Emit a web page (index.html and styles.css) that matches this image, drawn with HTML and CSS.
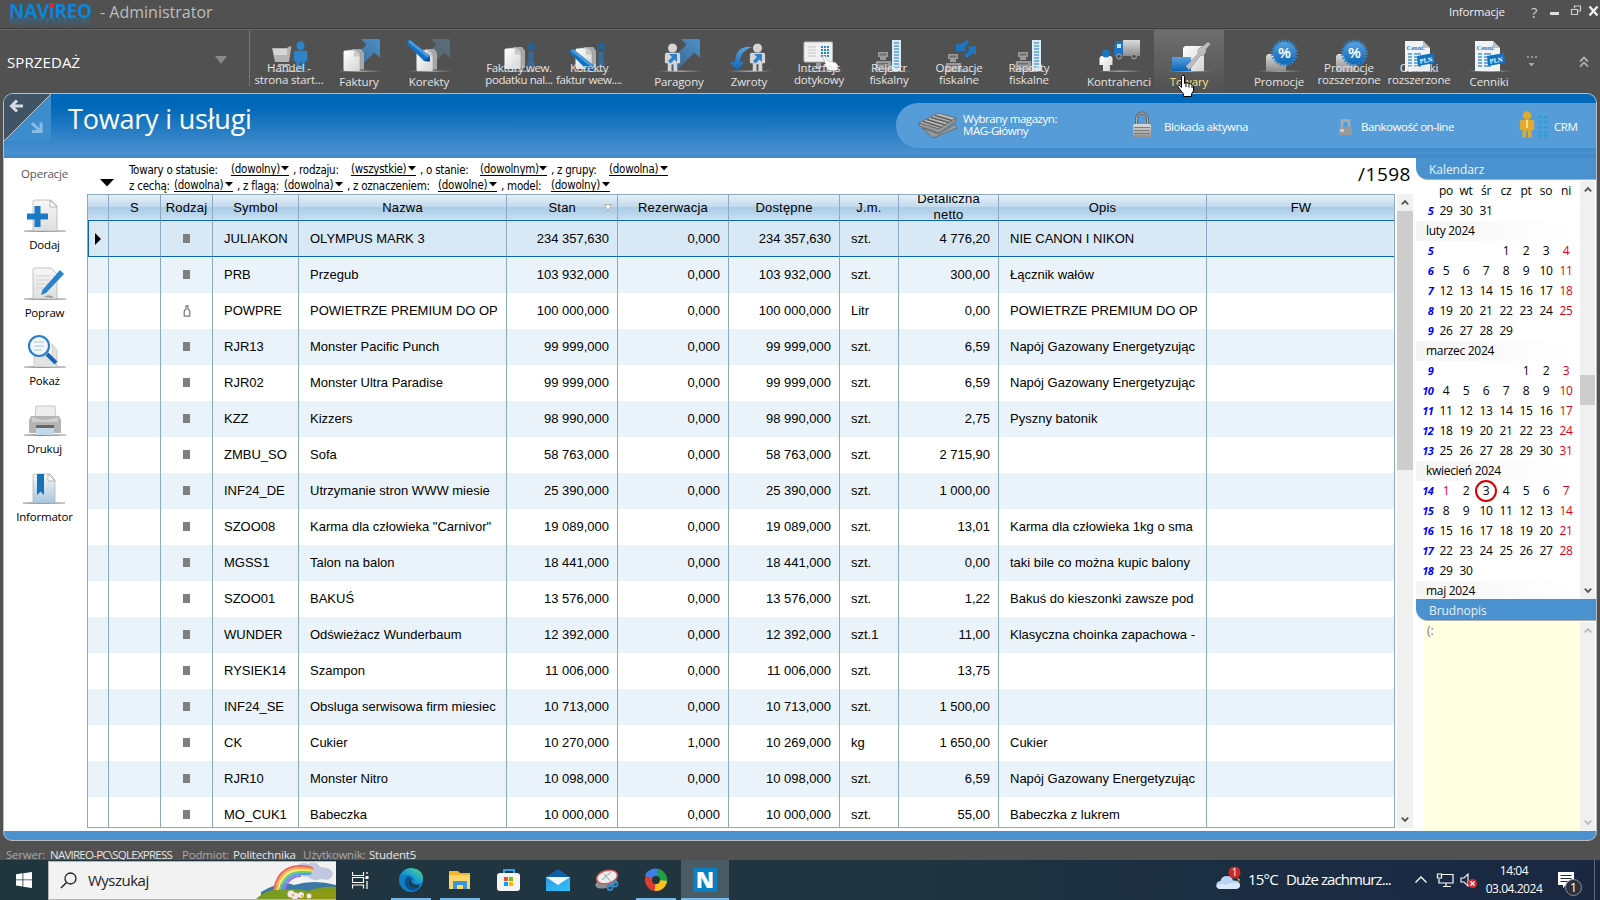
FILE: index.html
```html
<!DOCTYPE html>
<html lang="pl">
<head>
<meta charset="utf-8">
<title>Navireo</title>
<link rel="stylesheet" href="styles.css">
</head>
<body>
<svg class="defs" width="0" height="0">
  <defs>
    <linearGradient id="gGray" x1="0" y1="0" x2="0" y2="1"><stop offset="0" stop-color="#dcdcdc"/><stop offset="1" stop-color="#8c8c8c"/></linearGradient>
    <linearGradient id="gPaper" x1="0" y1="0" x2="1" y2="1"><stop offset="0" stop-color="#fff"/><stop offset="1" stop-color="#d4d4d4"/></linearGradient>
    <linearGradient id="gBlue" x1="0" y1="0" x2="0" y2="1"><stop offset="0" stop-color="#5aa2e0"/><stop offset="1" stop-color="#0a64b4"/></linearGradient>
    <linearGradient id="gArrow" x1="1" y1="0" x2="0" y2="1"><stop offset="0" stop-color="#4a90cc"/><stop offset="1" stop-color="#3a6184"/></linearGradient>
    <linearGradient id="gArrowG" x1="1" y1="0" x2="0" y2="1"><stop offset="0" stop-color="#5b6d7d"/><stop offset="1" stop-color="#55606a"/></linearGradient>
    <linearGradient id="gShadow" x1="0" y1="0" x2="1" y2="0"><stop offset="0" stop-color="#aaa" stop-opacity="0"/><stop offset=".5" stop-color="#aaa"/><stop offset="1" stop-color="#aaa" stop-opacity="0"/></linearGradient>
    <linearGradient id="gShadowD" x1="0" y1="0" x2="1" y2="0"><stop offset="0" stop-color="#777" stop-opacity=".5"/><stop offset=".4" stop-color="#666"/><stop offset="1" stop-color="#777" stop-opacity=".5"/></linearGradient>
    <linearGradient id="gSheet" x1="0" y1="0" x2="0" y2="1"><stop offset="0" stop-color="#f7f7f7"/><stop offset="1" stop-color="#dedede"/></linearGradient>
    <linearGradient id="gBook" x1="0" y1="0" x2="0" y2="1"><stop offset="0" stop-color="#f7f7f7"/><stop offset="1" stop-color="#a9c6de"/></linearGradient>
    <linearGradient id="gEdge" x1="0" y1="1" x2="1" y2="0"><stop offset="0" stop-color="#0c59a4"/><stop offset=".5" stop-color="#1ba0d8"/><stop offset="1" stop-color="#5fdc6a"/></linearGradient>
    <linearGradient id="gMail" x1="0" y1="0" x2="1" y2="1"><stop offset="0" stop-color="#2f9be8"/><stop offset="1" stop-color="#2cc4f6"/></linearGradient>
    <symbol id="base" viewBox="0 0 70 45"><rect x="14" y="40.5" width="44" height="1.4" fill="url(#gShadow)"/></symbol>
    <symbol id="docs" viewBox="0 0 70 45">
      <path d="M28 19h9l3 3.500v17h-12z" fill="#a8a8a8"/>
      <path d="M24 20h9l3 3.500v17h-12z" fill="#c6c6c6" stroke="#8f8f8f" stroke-width=".5"/>
      <path d="M21 20.500h9l5.500 6v14.500H21q-1.500 0-1.500-1.500V22q0-1.500 1.500-1.500z" fill="url(#gPaper)"/>
      <path d="M30 20.500v6h5.500z" fill="#c8c8c8"/>
    </symbol>
    <symbol id="up" viewBox="0 0 70 45"><path d="M37 9h17q2 0 2 2v17l-5.500-5.500L32 41 24 33l18.500-18.500z"/></symbol>
    <symbol id="pen" viewBox="0 0 70 45"><path d="M16 10l20 16v5.500l-6-.5L13 14q0-4 3-4z" fill="#0f72c4"/><path d="M16 10l20 16-2 2L14 12z" fill="#4a9ade"/><path d="M30 31l6 .5-.5-5.500z" fill="#0a4f91"/></symbol>
    <symbol id="info" viewBox="0 0 70 45"><path d="M43.500 13.500l7 6M50.500 13.500l-7 6" stroke="#1468ae" stroke-width="2.200"/><path d="M44.500 22h5v11h3l-5.500 5-5.500-5h3z" fill="#3173a8" opacity=".8"/></symbol>
    <symbol id="man" viewBox="0 0 20 30"><circle cx="10" cy="5" r="4.800"/><path d="M4 10h12q2 0 2 2v9h-3v8.500H11V22H9v7.500H5V21H2v-9q0-2 2-2z"/></symbol>
    <symbol id="till" viewBox="0 0 70 45"><path d="M24 22h10v5H24zM26 27h6v3h-6zM22 31h15l1 9H21z" fill="#9a9a9a"/><path d="M25.500 23.500h7v2h-7zM24 33h10v1.500H24zM24 36h10v1.500H24z" fill="#6c6c6c"/></symbol>
    <symbol id="tape" viewBox="0 0 70 45"><path d="M38 10h9v31h-9z" fill="#dceaf5"/><path d="M40 13h5M40 16h5M40 19h5M40 22h5M40 25h5M40 28h5M40 31h5M40 34h5M40 37h5" stroke="#5a9fd8" stroke-width="1.300"/></symbol>
    <symbol id="promo" viewBox="0 0 70 45"><path d="M24 24h15l3 3v14H22V26z" fill="url(#gGray)"/><circle cx="40.500" cy="23" r="11.500" fill="url(#gBlue)"/><circle cx="40.500" cy="23" r="12" fill="none" stroke="#2c85cf" stroke-width="3" stroke-dasharray="1.640 1.500"/><text x="40.500" y="28" text-anchor="middle" font-family="Liberation Sans" font-size="14" font-weight="bold" fill="#fff">%</text></symbol>
    <symbol id="price" viewBox="0 0 70 45"><path d="M21 11h18l7 7v23H21z" fill="#f0f3f6"/><path d="M39 11l7 7h-7z" fill="#b9c2ca"/><text x="22.500" y="20" font-family="Liberation Serif" font-size="6.500" font-weight="bold" fill="#2b7dc4">Cenni.</text><path d="M24 24h4M30 24h7M24 27h4M30 27h6M24 30h4M30 30h4M24 33h4M30 33h5M24 36h4M30 36h7" stroke="#4a93d0" stroke-width="1.300"/><path d="M33 26l17-3 1 10-17 3z" fill="#1671c0"/><text x="36" y="33.500" transform="rotate(-9 36 33)" font-family="Liberation Serif" font-size="6.500" font-weight="bold" fill="#fff">PLN</text></symbol>
    <symbol id="caret" viewBox="0 0 8 5"><path d="M0 0h8L4 4.500z" fill="#000"/></symbol>
    <symbol id="chUp" viewBox="0 0 8 7"><path d="M.8 5.300L4 2.100l3.200 3.200" fill="none" stroke="currentColor" stroke-width="1.900"/></symbol>
    <symbol id="chDn" viewBox="0 0 8 7"><path d="M.8 1.700L4 4.900l3.200-3.200" fill="none" stroke="currentColor" stroke-width="1.900"/></symbol>
    <symbol id="bottle" viewBox="0 0 8 12"><path d="M3 .8h2v3.200l1.800 2v5.200H1.200V6L3 4z" fill="#fff" stroke="#777" stroke-width="1.200"/></symbol>
    <symbol id="floor" viewBox="0 0 42 36"><rect x="0" y="32.300" width="42" height="1.500" fill="url(#gShadowD)"/></symbol>
    <symbol id="padlock" viewBox="0 0 20 28"><path d="M4.500 14V8a5.500 6 0 0 1 11 0v6" fill="none" stroke="#666" stroke-width="3"/><path d="M4.500 14V8a5.500 6 0 0 1 11 0v6" fill="none" stroke="#b5b5b5" stroke-width="1"/><rect x="1" y="13" width="18" height="14" rx="2" fill="url(#gGray)"/><path d="M2 16.500h16M2 19.500h16M2 22.500h16" stroke="#808080" stroke-width="1"/></symbol>
  </defs>
</svg>

<div class="desktop">
  <header class="titlebar">
    <div class="brand"><span class="logo">NAViREO</span><i class="dot"></i><i class="mirror"></i></div>
    <span class="who">- Administrator</span>
    <span class="inform">Informacje</span>
    <span class="help">?</span>
    <svg class="winbtns" width="50" height="24"><path d="M0 13.500h9" stroke="#ddd" stroke-width="3"/><path d="M24.500 8.500v-2.500h6v5h-2.500M21.500 9.500h6v5h-6z" fill="none" stroke="#ccc" stroke-width="1.200"/><path d="M39.500 6.500l8 9M47.500 6.500l-8 9" stroke="#eee" stroke-width="2.400"/></svg>
  </header>

  <nav class="toolbar">
    <div class="module"><span>SPRZEDAŻ</span><svg width="12" height="8"><path d="M0 0h12L6 8z" fill="#8a8a8a"/></svg></div>
    <div class="tool two"><svg viewBox="0 0 70 45"><use href="#base"/><path d="M18 18h15l2-1.500h2.500L35 32H21zM24 34h12v2H24z" fill="#b4b4b4"/><path d="M19 19h14v6H20z" fill="#d6d6d6"/><g fill="#2d82c8"><svg x="38" y="11" width="17" height="29" viewBox="0 0 20 30" preserveAspectRatio="none"><use href="#man"/></svg></g></svg><span>Handel -<br>strona start...</span></div>
    <div class="tool"><svg viewBox="0 0 70 45"><use href="#base"/><use href="#up" fill="url(#gArrow)"/><use href="#docs"/></svg><span>Faktury</span></div>
    <div class="tool"><svg viewBox="0 0 70 45"><use href="#base"/><use href="#up" fill="url(#gArrowG)"/><use href="#docs" x="3"/><use href="#pen"/></svg><span>Korekty</span></div>
    <div class="tool two gap"><svg viewBox="0 0 70 45"><use href="#base"/><use href="#docs" y="-2" x="1"/><use href="#info"/></svg><span class="tight">Faktury wew.<br>podatku nal...</span></div>
    <div class="tool two"><svg viewBox="0 0 70 45"><use href="#base"/><use href="#docs" y="-2" x="2"/><use href="#pen" x="3" y="9"/><use href="#info"/></svg><span class="tight">Korekty<br>faktur wew....</span></div>
    <div class="tool gap"><svg viewBox="0 0 70 45"><use href="#base"/><use href="#up" fill="url(#gArrow)"/><g fill="#d4d4d4"><svg x="19" y="13" width="19" height="29" viewBox="0 0 20 30"><use href="#man"/></svg></g><path d="M25 24h8v8l-2.500-2.500-4 4-2.500-2.500 4-4z" fill="#2d82c8"/></svg><span>Paragony</span></div>
    <div class="tool"><svg viewBox="0 0 70 45"><use href="#base"/><path d="M38 17q-16-2-17 15h-5l7 9 7-9h-4q0-11 12-15z" fill="url(#gBlue)"/><g fill="#d4d4d4"><svg x="34" y="13" width="19" height="29" viewBox="0 0 20 30"><use href="#man"/></svg></g><path d="M40 24h8v8l-2.500-2.500-4 4-2.500-2.500 4-4z" fill="#2d82c8"/></svg><span>Zwroty</span></div>
    <div class="tool two"><svg viewBox="0 0 70 45"><use href="#base"/><path d="M32 33h5v6h-5z" fill="#999"/><rect x="20" y="12" width="28.500" height="20" rx="1" fill="#f0f0f0" stroke="#bbb"/><path d="M24 17h8M24 20h8M24 23h8M24 26h8" stroke="#c4c4c4"/><path d="M37 17h8M37 20h8M37 23h8M37 26h8" stroke="#2d82c8" stroke-width="2" stroke-dasharray="2 1"/><path d="M38.500 26q2-1.500 3 1l3 4 7 1.500 2.500 3-1 5h-8l-5-6 1.500-.5z" fill="#fff" stroke="#999" stroke-width=".5"/></svg><span>Interfejs<br>dotykowy</span></div>
    <div class="tool two"><svg viewBox="0 0 70 45"><use href="#base"/><use href="#till"/><use href="#tape"/></svg><span>Rejestr<br>fiskalny</span></div>
    <div class="tool two"><svg viewBox="0 0 70 45"><use href="#base"/><use href="#till" y="2"/><path d="M43 10l2 2-5 6 3 3H32V13l3 2zM52 16v9l-3-2-6 5-3-3 6-5-3-3z" fill="#1c76c4"/></svg><span>Operacje<br>fiskalne</span></div>
    <div class="tool two"><svg viewBox="0 0 70 45"><use href="#base"/><use href="#till"/><use href="#tape"/></svg><span>Raporty<br>fiskalne</span></div>
    <div class="tool gap"><svg viewBox="0 0 70 45"><use href="#base"/><path d="M39 10h17v16H39z" fill="url(#gGray)"/><path d="M32 11h7v15h-9v-9z" fill="#1c74c2"/><path d="M33 14h4v4h-4z" fill="#cfe3f4"/><circle cx="35" cy="26.500" r="2.500" fill="#555" stroke="#aaa"/><circle cx="50" cy="26.500" r="2.500" fill="#555" stroke="#aaa"/><path d="M17 26h10l1.500 2v7H26v6h-7v-6h-3.500v-7z" fill="url(#gPaper)"/><circle cx="22" cy="23.500" r="4" fill="#1c74c2"/></svg><span>Kontrahenci</span></div>
    <div class="tool hot"><svg viewBox="0 0 70 45"><use href="#base"/><path d="M31 16h18l1 2v23H29V18z" fill="url(#gPaper)"/><path d="M18 27h19v14H18z" fill="url(#gBlue)"/><path d="M32 36l12-12q-1-6 4-7l6-5 2.500 2-4.500 5q1 6-6 7L35 40z" fill="#bdbdbd" stroke="#8c8c8c" stroke-width=".6"/></svg><span>Towary</span></div>
    <div class="tool gap"><svg viewBox="0 0 70 45"><use href="#base"/><use href="#promo"/></svg><span>Promocje</span></div>
    <div class="tool two"><svg viewBox="0 0 70 45"><use href="#base"/><use href="#promo"/></svg><span>Promocje<br>rozszerzone</span></div>
    <div class="tool two"><svg viewBox="0 0 70 45"><use href="#base"/><use href="#price"/></svg><span>Cenniki<br>rozszerzone</span></div>
    <div class="tool"><svg viewBox="0 0 70 45"><use href="#base"/><use href="#price"/></svg><span>Cenniki</span></div>
    <svg class="more" width="70" height="30"><path d="M3 5h2M7 5h2M11 5h2" stroke="#aaa" stroke-width="1.500"/><path d="M4.500 11h6l-3 3.500z" fill="#aaa"/><path d="M56 9.500l4-4 4 4M56 14.500l4-4 4 4" fill="none" stroke="#aaa" stroke-width="1.800"/></svg>
  </nav>

  <main class="window">
    <div class="band">
      <svg class="corner" width="48" height="48"><path d="M0 0h47L0 47z" fill="#405465"/><path d="M47 0v43q0 4-4 4H0z" fill="#3d8dce"/><path d="M0 47L47 0" stroke="#b9c4cc" stroke-width="1"/><path d="M19 12H8M13 6.500L7.500 12l5.500 5.500" fill="none" stroke="#d5dade" stroke-width="3"/><path d="M28 29l7 7M37 28.500v9h-9" fill="none" stroke="#88bbe6" stroke-width="3"/></svg>
      <h1>Towary i usługi</h1>
      <div class="pill">
        <svg class="pal" width="40" height="30"><path d="M1 12L20 2l18 5-17 11z" fill="#b8b8b8" stroke="#666" stroke-width=".8"/><path d="M5 10.500l19 6M9 8.500l18 5.500M13 6.500l18 5M17 4.500l17 5" stroke="#5f5f5f" stroke-width="1.600"/><path d="M1 12l20 6 17-11v3L21 22 1 15zM4 17l17 6 16-10 2 4-24 10z" fill="#999" stroke="#666" stroke-width=".8"/></svg>
        <span class="mag">Wybrany magazyn:<br>MAG-Główny</span>
        <svg class="lock" width="20" height="28"><use href="#padlock"/></svg><span class="blok">Blokada aktywna</span>
        <svg class="lock2" width="15" height="18"><path d="M4 9V2.500h7V9" fill="none" stroke="#a8aeb4" stroke-width="2.500"/><path d="M1 9h13v8H1z" fill="#999"/><path d="M2 11h4v3H2z" fill="#c8c8c8"/></svg><span class="bank">Bankowość on-line</span>
        <svg class="crmi" width="32" height="30"><g fill="#e0aa2e"><svg x="0" y="0" width="18" height="29" viewBox="0 0 20 30"><use href="#man"/></svg></g><path d="M9 10v8" stroke="#f6dc8c" stroke-width="2"/><path d="M20 7h10M20 12h10M20 17h10M20 22h10M20 26h10" stroke="#2ea0d6" stroke-width="2.500" stroke-dasharray="4 2"/></svg><span class="crm">CRM</span>
      </div>
    </div>

    <div class="body">
      <aside class="ops">
        <h2>Operacje</h2>
        <div class="op"><svg width="42" height="36"><use href="#floor"/><path d="M11 2h16l6 6v25H9V4q0-2 2-2z" fill="url(#gSheet)" stroke="#b5b5b5" stroke-width=".8"/><path d="M26 2v7h7z" fill="#fff" stroke="#aaa" stroke-width=".8"/><path d="M3 15.500h7.500V8h6v7.500H24v6h-7.500V29h-6v-7.500H3z" fill="#1c78c6"/></svg><span>Dodaj</span></div>
        <div class="op"><svg width="42" height="36"><use href="#floor"/><path d="M11 2h16l6 6v25H9V4q0-2 2-2z" fill="url(#gSheet)" stroke="#b5b5b5" stroke-width=".8"/><path d="M12 10h14M12 14h14M12 18h12M12 22h8" stroke="#d0d0d0"/><path d="M36 4l4 4-18 19-5 2 1.500-5z" fill="#2a82d0"/><path d="M20 31q6-4 10 1z" fill="#999"/></svg><span>Popraw</span></div>
        <div class="op"><svg width="42" height="36"><use href="#floor"/><path d="M10 22h18V10l5 6v17H10z" fill="#e2e2e2" stroke="#bbb" stroke-width=".6"/><circle cx="15" cy="12" r="10" fill="#f2f7fb" stroke="#2a7fc8" stroke-width="2.200"/><path d="M10 8h10M10 12h10M10 16h8" stroke="#bcd9f1" stroke-width="1.500"/><path d="M23 20l9 9" stroke="#1467b4" stroke-width="4"/></svg><span>Pokaż</span></div>
        <div class="op"><svg width="42" height="36"><use href="#floor"/><path d="M13 4h18l1 12H11l1-12z" fill="#ededed" stroke="#bbb" stroke-width=".8"/><path d="M7 14h28l2 4v13H5V18z" fill="#b4b4b4"/><path d="M8 15q13 6 26 0v5H8z" fill="#cfcfcf"/><path d="M12 23h18v3H12z" fill="#666"/><path d="M12 26h18v7H12z" fill="#c2d9ec"/></svg><span>Drukuj</span></div>
        <div class="op"><svg width="42" height="36"><use href="#floor"/><path d="M12 4h15l5 6v23H10V6q0-2 2-2z" fill="url(#gBook)" stroke="#b5b5b5" stroke-width=".8"/><path d="M25 4v7h7z" fill="#fff" stroke="#aaa" stroke-width=".8"/><path d="M14 4h7v21l-3.500-3.500L14 25z" fill="#1570bd"/></svg><span>Informator</span></div>
      </aside>

      <section class="center">
        <div class="filters">
          <svg class="toggle" width="14" height="8"><path d="M0 0h14L7 7.500z"/></svg>
          <div class="lines">
            <div class="fl"><span class="w102">Towary o statusie:</span><a class="w58">(dowolny)<svg width="8" height="5"><use href="#caret"/></svg></a><span class="c w62">, rodzaju:</span><a class="w65">(wszystkie)<svg width="8" height="5"><use href="#caret"/></svg></a><span class="c w64">, o stanie:</span><a class="w67">(dowolnym)<svg width="8" height="5"><use href="#caret"/></svg></a><span class="c w62">, z grupy:</span><a class="w59">(dowolna)<svg width="8" height="5"><use href="#caret"/></svg></a></div>
            <div class="fl"><span class="w45">z cechą:</span><a class="w59">(dowolna)<svg width="8" height="5"><use href="#caret"/></svg></a><span class="c w51">, z flagą:</span><a class="w59">(dowolna)<svg width="8" height="5"><use href="#caret"/></svg></a><span class="c low w95">, z oznaczeniem:</span><a class="w59">(dowolne)<svg width="8" height="5"><use href="#caret"/></svg></a><span class="c low w54">, model:</span><a class="w59">(dowolny)<svg width="8" height="5"><use href="#caret"/></svg></a></div>
          </div>
          <span class="count">/1598</span>
        </div>
        <div class="gridwrap">
          <div class="gridview">
          <table>
            <colgroup><col class="k0"><col class="k1"><col class="k2"><col class="k3"><col class="k4"><col class="k5"><col class="k6"><col class="k7"><col class="k8"><col class="k9"><col class="k10"><col class="k11"></colgroup>
            <thead><tr><th></th><th>S</th><th>Rodzaj</th><th>Symbol</th><th>Nazwa</th><th><div class="sort">Stan<svg width="8" height="8"><path d="M.5 .5h7L4 7z" fill="#fff" stroke="#aaa"/></svg></div></th><th>Rezerwacja</th><th>Dostępne</th><th>J.m.</th><th><div class="wrap">Detaliczna<br>netto</div></th><th>Opis</th><th>FW</th></tr></thead>
            <tbody>
            <tr class="sel"><td class="m"><svg width="6" height="12"><path d="M0 0l6 6-6 6z"/></svg></td><td></td><td class="g"><i></i></td><td>JULIAKON</td><td>OLYMPUS MARK 3</td><td class="n">234 357,630</td><td class="n">0,000</td><td class="n">234 357,630</td><td>szt.</td><td class="n">4 776,20</td><td>NIE CANON I NIKON</td><td></td></tr>
            <tr><td></td><td></td><td class="g"><i></i></td><td>PRB</td><td>Przegub</td><td class="n">103 932,000</td><td class="n">0,000</td><td class="n">103 932,000</td><td>szt.</td><td class="n">300,00</td><td>Łącznik wałów</td><td></td></tr>
            <tr><td></td><td></td><td class="g"><svg width="8" height="12"><use href="#bottle"/></svg></td><td>POWPRE</td><td>POWIETRZE PREMIUM DO OP</td><td class="n">100 000,000</td><td class="n">0,000</td><td class="n">100 000,000</td><td>Litr</td><td class="n">0,00</td><td>POWIETRZE PREMIUM DO OP</td><td></td></tr>
            <tr><td></td><td></td><td class="g"><i></i></td><td>RJR13</td><td>Monster Pacific Punch</td><td class="n">99 999,000</td><td class="n">0,000</td><td class="n">99 999,000</td><td>szt.</td><td class="n">6,59</td><td>Napój Gazowany Energetyzując</td><td></td></tr>
            <tr><td></td><td></td><td class="g"><i></i></td><td>RJR02</td><td>Monster Ultra Paradise</td><td class="n">99 999,000</td><td class="n">0,000</td><td class="n">99 999,000</td><td>szt.</td><td class="n">6,59</td><td>Napój Gazowany Energetyzując</td><td></td></tr>
            <tr><td></td><td></td><td class="g"><i></i></td><td>KZZ</td><td>Kizzers</td><td class="n">98 990,000</td><td class="n">0,000</td><td class="n">98 990,000</td><td>szt.</td><td class="n">2,75</td><td>Pyszny batonik</td><td></td></tr>
            <tr><td></td><td></td><td class="g"><i></i></td><td>ZMBU_SO</td><td>Sofa</td><td class="n">58 763,000</td><td class="n">0,000</td><td class="n">58 763,000</td><td>szt.</td><td class="n">2 715,90</td><td></td><td></td></tr>
            <tr><td></td><td></td><td class="g"><i></i></td><td>INF24_DE</td><td>Utrzymanie stron WWW miesie</td><td class="n">25 390,000</td><td class="n">0,000</td><td class="n">25 390,000</td><td>szt.</td><td class="n">1 000,00</td><td></td><td></td></tr>
            <tr><td></td><td></td><td class="g"><i></i></td><td>SZOO08</td><td>Karma dla człowieka "Carnivor"</td><td class="n">19 089,000</td><td class="n">0,000</td><td class="n">19 089,000</td><td>szt.</td><td class="n">13,01</td><td>Karma dla człowieka 1kg o sma</td><td></td></tr>
            <tr><td></td><td></td><td class="g"><i></i></td><td>MGSS1</td><td>Talon na balon</td><td class="n">18 441,000</td><td class="n">0,000</td><td class="n">18 441,000</td><td>szt.</td><td class="n">0,00</td><td>taki bile co można kupic balony</td><td></td></tr>
            <tr><td></td><td></td><td class="g"><i></i></td><td>SZOO01</td><td>BAKUŚ</td><td class="n">13 576,000</td><td class="n">0,000</td><td class="n">13 576,000</td><td>szt.</td><td class="n">1,22</td><td>Bakuś do kieszonki zawsze pod</td><td></td></tr>
            <tr><td></td><td></td><td class="g"><i></i></td><td>WUNDER</td><td>Odświeżacz Wunderbaum</td><td class="n">12 392,000</td><td class="n">0,000</td><td class="n">12 392,000</td><td>szt.1</td><td class="n">11,00</td><td>Klasyczna choinka zapachowa -</td><td></td></tr>
            <tr><td></td><td></td><td class="g"><i></i></td><td>RYSIEK14</td><td>Szampon</td><td class="n">11 006,000</td><td class="n">0,000</td><td class="n">11 006,000</td><td>szt.</td><td class="n">13,75</td><td></td><td></td></tr>
            <tr><td></td><td></td><td class="g"><i></i></td><td>INF24_SE</td><td>Obsluga serwisowa firm miesiec</td><td class="n">10 713,000</td><td class="n">0,000</td><td class="n">10 713,000</td><td>szt.</td><td class="n">1 500,00</td><td></td><td></td></tr>
            <tr><td></td><td></td><td class="g"><i></i></td><td>CK</td><td>Cukier</td><td class="n">10 270,000</td><td class="n">1,000</td><td class="n">10 269,000</td><td>kg</td><td class="n">1 650,00</td><td>Cukier</td><td></td></tr>
            <tr><td></td><td></td><td class="g"><i></i></td><td>RJR10</td><td>Monster Nitro</td><td class="n">10 098,000</td><td class="n">0,000</td><td class="n">10 098,000</td><td>szt.</td><td class="n">6,59</td><td>Napój Gazowany Energetyzując</td><td></td></tr>
            <tr><td></td><td></td><td class="g"><i></i></td><td>MO_CUK1</td><td>Babeczka</td><td class="n">10 000,000</td><td class="n">0,000</td><td class="n">10 000,000</td><td>szt.</td><td class="n">55,00</td><td>Babeczka z lukrem</td><td></td></tr>
            </tbody>
          </table>
          </div>
          <div class="scroll main"><svg width="8" height="7"><use href="#chUp"/></svg><div class="thumb"></div><svg class="dn" width="8" height="7"><use href="#chDn"/></svg></div>
        </div>
      </section>

      <aside class="right">
        <h3>Kalendarz</h3>
        <div class="calrow">
          <div class="cal">
            <b></b><span>po</span><span>wt</span><span>śr</span><span>cz</span><span>pt</span><span>so</span><span>ni</span>
            <b>5</b><span>29</span><span>30</span><span>31</span><span></span><span></span><span></span><span></span>
            <p>luty 2024</p>
            <b>5</b><span></span><span></span><span></span><span>1</span><span>2</span><span>3</span><u>4</u>
            <b>6</b><span>5</span><span>6</span><span>7</span><span>8</span><span>9</span><span>10</span><u>11</u>
            <b>7</b><span>12</span><span>13</span><span>14</span><span>15</span><span>16</span><span>17</span><u>18</u>
            <b>8</b><span>19</span><span>20</span><span>21</span><span>22</span><span>23</span><span>24</span><u>25</u>
            <b>9</b><span>26</span><span>27</span><span>28</span><span>29</span><span></span><span></span><span></span>
            <p>marzec 2024</p>
            <b>9</b><span></span><span></span><span></span><span></span><span>1</span><span>2</span><u>3</u>
            <b>10</b><span>4</span><span>5</span><span>6</span><span>7</span><span>8</span><span>9</span><u>10</u>
            <b>11</b><span>11</span><span>12</span><span>13</span><span>14</span><span>15</span><span>16</span><u>17</u>
            <b>12</b><span>18</span><span>19</span><span>20</span><span>21</span><span>22</span><span>23</span><u>24</u>
            <b>13</b><span>25</span><span>26</span><span>27</span><span>28</span><span>29</span><span>30</span><u>31</u>
            <p>kwiecień 2024</p>
            <b>14</b><u>1</u><span>2</span><span class="today">3</span><span>4</span><span>5</span><span>6</span><u>7</u>
            <b>15</b><span>8</span><span>9</span><span>10</span><span>11</span><span>12</span><span>13</span><u>14</u>
            <b>16</b><span>15</span><span>16</span><span>17</span><span>18</span><span>19</span><span>20</span><u>21</u>
            <b>17</b><span>22</span><span>23</span><span>24</span><span>25</span><span>26</span><span>27</span><u>28</u>
            <b>18</b><span>29</span><span>30</span><span></span><span></span><span></span><span></span><span></span>
            <p>maj 2024</p>
          </div>
          <div class="scroll side"><svg width="8" height="7"><use href="#chUp"/></svg><div class="thumb"></div><svg class="dn" width="8" height="7"><use href="#chDn"/></svg></div>
        </div>
        <h3>Brudnopis</h3>
        <div class="noterow">
          <div class="note">(:</div>
          <div class="scroll off"><svg width="8" height="7"><use href="#chUp"/></svg><svg class="dn" width="8" height="7"><use href="#chDn"/></svg></div>
        </div>
      </aside>
    </div>
  </main>

  <div class="status"><span class="s1">Serwer:</span><em class="s2">NAVIREO-PC\SQLEXPRESS</em><span class="s3">Podmiot:</span><em class="s4">Politechnika</em><span class="s5">Użytkownik:</span><em>Student5</em></div>

  <footer class="taskbar">
    <div class="start"><svg width="16" height="16"><path d="M0 2.200l6.500-.9v6.200H0zM7.300 1.200L16 0v7.500H7.300zM0 8.300h6.500v6.200L0 13.600zM7.300 8.300H16V16l-8.700-1.200z" fill="#fff"/></svg></div>
    <div class="search">
      <svg class="mag-i" width="18" height="18"><circle cx="10.500" cy="6.500" r="5.500" fill="none" stroke="#222" stroke-width="1.300"/><path d="M6.500 10.500L1 16" stroke="#222" stroke-width="1.400"/></svg>
      <span>Wyszukaj</span>
      <svg class="bow" width="80" height="37"><path d="M40 6q4-7 12-4 8-4 12 3 12 0 13 7-2 8-12 5-7 3-13-2-9 0-12-9z" fill="#c1c8e0"/><path d="M5 30q20-12 33-7 20-6 42 0v10H5z" fill="#3c78a4"/><g fill="none" stroke-width="2"><path d="M17 34Q20 4 44 4q10 0 13 3" stroke="#f0625c"/><path d="M19 34Q22 6 44 6q9 0 13 2.500" stroke="#f8ac50"/><path d="M21 34Q24 8 45 8q8 0 12 1.500" stroke="#f6ea6a"/><path d="M23 34Q26 10 45 10q7 0 11 .5" stroke="#68ca78"/><path d="M25 34Q28 12 45 12q6 0 10 0" stroke="#559cf0"/><path d="M27 34Q30 14 45 14" stroke="#9b75dc"/></g><path d="M0 37q10-10 22-9 20-2 30 1 14-5 28-4v12z" fill="#7a9c22"/><path d="M30 37q20-9 50-9v9z" fill="#8e9a12"/><g fill="#f3e8fb"><circle cx="35" cy="32" r="3.500"/><circle cx="39" cy="34" r="3.500"/><circle cx="45" cy="33" r="3"/><circle cx="53" cy="34" r="2.500"/></g><circle cx="37" cy="33" r="1.500" fill="#f0b73c"/><circle cx="46" cy="34" r="1.200" fill="#f0b73c"/></svg>
    </div>
    <div class="tview"><svg width="17" height="17"><path d="M.5 0v3.500h11V0M.5 16.500V13h11v3.500M.5 5.500h11v5H.5zM15 0v2M15 9v8" fill="none" stroke="#fff" stroke-width="1.200"/><path d="M13.500 4h3v3h-3z" fill="#fff"/></svg></div>
    <div class="app on"><svg width="24" height="24"><circle cx="12" cy="12" r="12" fill="#0f7fc6"/><path d="M1 9Q4 0 12 0q12 1 12 11 0 5-6 5-5 0-3-4 0-5-6-5-5 0-8 2z" fill="url(#gEdge)"/><path d="M9 8q-7 6 0 13 5 4 12-2-8 2-10-3-2-4 1-6z" fill="#0b4f94"/><path d="M13 10q-3 6 5 7l3-1q-1 3-3 4-8 0-8-6 0-3 3-4z" fill="#223a45"/></svg></div>
    <div class="app on folder"><svg width="22" height="20"><path d="M0 1h9l2 2h10v16H0z" fill="#f0b530"/><path d="M0 5h21v14H0z" fill="#fcd668"/><path d="M4 19v-8h14v8h-4v-4H8v4z" fill="#3a97dd"/></svg></div>
    <div class="app"><svg width="24" height="24"><path d="M7 6V2h10v4" fill="none" stroke="#28a8ea" stroke-width="2"/><rect x="0" y="5" width="23" height="18" rx="3" fill="#f4f4f4"/><path d="M7 9h4v4H7z" fill="#f25022"/><path d="M12 9h4v4h-4z" fill="#7fba00"/><path d="M7 14h4v4H7z" fill="#00a4ef"/><path d="M12 14h4v4h-4z" fill="#ffb900"/></svg></div>
    <div class="app"><svg width="24" height="22"><path d="M0 8l12-8 12 8z" fill="#0e5ea8"/><path d="M0 8h24v14H0z" fill="url(#gMail)"/><path d="M0 8h24L12 16z" fill="#f1f6fb"/></svg></div>
    <div class="app"><svg width="24" height="23"><ellipse cx="11" cy="14" rx="11" ry="5" fill="#8a8f92" transform="rotate(-15 11 14)"/><ellipse cx="12" cy="8" rx="10.500" ry="6.500" fill="#eceff0" stroke="#d65a58" stroke-width="1.500" transform="rotate(-15 12 8)"/><path d="M7 11l9-8M9 5l9 10" stroke="#999"/><circle cx="15" cy="18.500" r="2.500" fill="none" stroke="#3489cc" stroke-width="1.800"/><circle cx="20" cy="15" r="2.500" fill="none" stroke="#3489cc" stroke-width="1.800"/></svg></div>
    <div class="app on"><svg width="24" height="24"><circle cx="12" cy="12" r="7" fill="none" stroke="#e13a2e" stroke-width="8"/><g fill="none" stroke-width="8"><path d="M4.500 9a8 8 0 0 1 10-4" stroke="#3b7fe6"/><path d="M13 5a7.300 7.300 0 0 1 6 9" stroke="#1ca04c"/><path d="M19 12.500a7.300 7.300 0 0 1-8 6.500" stroke="#f6c21c"/></g><circle cx="12" cy="12" r="4" fill="#20353f"/></svg></div>
    <div class="app on active"><svg width="24" height="24"><path d="M0 0h24v24H0z" fill="#0a80c4"/><text x="12" y="20" text-anchor="middle" font-family="Open Sans" font-weight="800" font-size="22" fill="#fff">N</text></svg></div>
    <div class="weather"><svg width="26" height="26"><path d="M4 23q-5-1-3.500-5 1-3 4-3 1-5 6.500-5 5 0 6 4.500 6-.5 7 4 0 4-4 4.500z" fill="#b9d2f6"/><path d="M1 19q4-2 8 0 8-4 15-1 1 4-4 5H4q-3 0-3-4z" fill="#dbe8fb"/><path d="M21 12l3 1-1 3z" fill="#f2a52e"/><circle cx="18.500" cy="6.500" r="6" fill="#cc2a1c"/><text x="18.500" y="10" text-anchor="middle" font-family="Open Sans" font-size="10" fill="#fff">1</text></svg><span class="temp">15°C</span><span class="desc">Duże zachmurz...</span></div>
    <svg class="tray" width="64" height="20"><path d="M.5 12.500L6 7l5.500 5.500" fill="none" stroke="#fff" stroke-width="1.300"/><path d="M26 4.500h12v8.500H24V9M28 16.500h8M31 13v3M22.500 4h4v4h-4z" fill="none" stroke="#fff" stroke-width="1.200"/><path d="M46 8h3l4-4v12l-4-4h-3z" fill="none" stroke="#fff" stroke-width="1.100"/><circle cx="57.500" cy="13.500" r="4.500" fill="#dc2a30"/><path d="M55.500 11.500l4 4M59.500 11.500l-4 4" stroke="#fff" stroke-width="1.200"/></svg>
    <div class="clock"><span>14:04</span><span>03.04.2024</span></div>
    <svg class="notif" width="26" height="28"><path d="M0 2h16v13H8l-3 3v-3H0z" fill="#fff"/><path d="M2.500 5.500h11M2.500 8.500h11M2.500 11.500h7" stroke="#1b2c42" stroke-width="1.200"/><circle cx="15.500" cy="17.500" r="8" fill="#2b3138" stroke="#8b9097"/><text x="15.500" y="22" text-anchor="middle" font-family="Open Sans" font-size="13" fill="#fff">1</text></svg>
    <i class="peek"></i>
  </footer>
  <svg class="pointer" width="18" height="24"><path d="M5.500 1.500q2-1 2 1v7l1.500-1 2 .5 2 .5 2 1 1.500 1.500v5l-2 3v2.500H6.500V20l-4-5-2-3q.5-1.500 2-.5l2 2v-11z" fill="#fff" stroke="#000"/><path d="M9 9v4M12 9.500v4M15 11v3" stroke="#000"/></svg>
</div>
</body>
</html>
```
FILE: styles.css
```css
* { box-sizing: border-box; }
body { margin: 0; width: 1600px; height: 900px; overflow: hidden; background: #515151; font-family: "Open Sans", "Noto Sans", sans-serif; }
h1, h2, h3, p { margin: 0; font-weight: normal; }
.defs { position: absolute; }
svg { display: block; flex: none; }
.desktop { position: relative; width: 1600px; height: 900px; display: flex; flex-direction: column; overflow: hidden; }

/* title bar */
.titlebar { height: 30px; flex: none; display: flex; align-items: flex-start; border-bottom: 1px solid #666; box-shadow: inset 0 -1px #3c3c3c; white-space: nowrap; }
.brand { width: 100px; padding-left: 9px; position: relative; flex: none; }
.logo { display: block; font: bold 19px/26px "Open Sans"; color: #0a86d6; letter-spacing: -.3px; margin-top: -2px; }
.dot { position: absolute; left: 49px; top: 3px; width: 5px; height: 4px; background: #e0232b; }
.mirror { position: absolute; left: 10px; top: 18px; width: 80px; height: 9px; background: repeating-linear-gradient(90deg, transparent 0 3px, rgba(81,81,81,.5) 3px 6px), linear-gradient(rgba(10,134,214,.4), rgba(10,134,214,0)); }
.who { width: 1349px; flex: none; font-size: 16px; line-height: 22px; padding-top: 1px; color: #bdbdbd; letter-spacing: 0; }
.inform { width: 82px; flex: none; font-size: 11.500px; line-height: 24px; color: #eee; letter-spacing: -.2px; }
.help { width: 19px; flex: none; font: 15px/24px "Open Sans"; color: #ccc; }

/* toolbar */
.toolbar { height: 63px; flex: none; display: flex; }
.module { width: 250px; height: 56px; margin-right: 4px; display: flex; align-items: center; padding: 7px 22px 0 7px; justify-content: space-between; color: #fff; font-size: 15px; border-right: 1px solid #777; letter-spacing: .1px; }
.module svg { margin-top: -4px; }
.tool { width: 70px; display: grid; flex: none; font-size: 11.500px; line-height: 12px; color: #e4e4e4; text-align: center; white-space: nowrap; }
.tool > svg { grid-area: 1/1; width: 70px; height: 45px; }
.tool > span { grid-area: 1/1; padding-top: 46px; letter-spacing: -.1px; justify-self: center; }
.tool.two > span { padding-top: 32px; letter-spacing: -.15px; }
.tool.two > .tight { letter-spacing: -.4px; }
.gap { margin-left: 20px; }
.hot { background: linear-gradient(#6e6e6e, #515151); }
.hot span { color: #fbe484; }
.more { margin-top: 22px; }

/* window */
.window { width: 1594px; height: 748px; margin-left: 3px; flex: none; border: 1px solid #bcbcbc; border-radius: 10px 10px 9px 9px; overflow: hidden; background: #4a91cf; margin-bottom: -1px; }
.band { height: 64px; background: linear-gradient(#0068b8 0, #0068b8 12px, #4a91cf 60px, #4189c9 61px); display: flex; }
.corner { margin-right: 16px; }
h1 { font-size: 27px; line-height: 36px; padding-top: 7px; color: #fff; width: 828px; letter-spacing: -.2px; white-space: nowrap; }
.pill { height: 45px; margin-top: 9px; flex: 1; background: #559cd9; border-radius: 22px 0 0 22px; display: flex; align-items: center; color: #fff; font-size: 11.500px; line-height: 12px; white-space: nowrap; letter-spacing: -.45px; }
.pal { margin-left: 22px; }
.mag { width: 169px; margin-left: 5px; padding-bottom: 1px; }
.blok { width: 174px; margin-left: 12px; padding-top: 3px; }
.bank { width: 157px; margin-left: 8px; padding-top: 3px; }
.crm { padding-top: 3px; margin-left: 4px; }
.lock2 { margin-top: 3px; }
.lock { margin-top: -2px; }
.crmi { margin-top: -2px; }
.body { height: 673px; background: #fff; display: flex; }

.ops { width: 83px; flex: none; display: flex; flex-direction: column; align-items: center; padding-right: 2px; }
.ops h2 { font-size: 11.500px; line-height: 14px; padding-top: 9px; color: #555; height: 40px; letter-spacing: -.2px; }
.op { height: 68px; display: flex; flex-direction: column; align-items: center; font-size: 11.500px; line-height: 16px; color: #000; letter-spacing: -.2px; flex: none; }
.op span { margin-top: 3px; }

/* filters */
.center { width: 1329px; flex: none; }
.filters { height: 36px; display: flex; font: 11.500px/16px "DejaVu Sans Condensed", sans-serif; letter-spacing: -.25px; }
.toggle { margin: 21px 15px 0 13px; width: 14px; }
.lines { flex: 1; padding-top: 4px; }
.fl { display: flex; height: 16px; white-space: nowrap; }
.fl > * { flex: none; }
.fl a { height: 14px; line-height: 14px; border-bottom: 1px solid #000; display: flex; justify-content: space-between; }
.fl a svg { margin-top: 4px; }
.fl .c { padding-left: 4px; }
.fl .low { line-height: 17px; }
.w45 { width: 45px; } .w51 { width: 51px; } .w54 { width: 54px; } .w58 { width: 58px; } .w59 { width: 59px; } .w62 { width: 62px; } .w64 { width: 64px; } .w65 { width: 65px; } .w67 { width: 67px; } .w95 { width: 95px; } .w102 { width: 102px; }
.count { font: 19px/24px "Open Sans"; padding: 4px 5px 0 0; letter-spacing: .5px; }

/* grid */
.gridwrap { display: flex; height: 634px; }
.gridview { width: 1308px; height: 634px; overflow: hidden; border: 1px solid #89a9c4; flex: none; margin-right: 2px; }
table { width: 1307px; table-layout: fixed; border-collapse: separate; border-spacing: 0; font: 13px/16px "Liberation Sans", Arial, sans-serif; color: #000; }
.k0 { width: 21px; } .k1, .k2 { width: 52px; } .k3 { width: 86px; } .k4 { width: 208px; } .k5, .k6, .k7 { width: 111px; } .k8 { width: 59px; } .k9 { width: 100px; } .k10 { width: 208px; } .k11 { width: 188px; }
th { height: 25px; padding: 0; font-weight: normal; background: linear-gradient(#e6f0f8 0, #c2d9ee 46%, #a9cce8 48%, #b4d3eb 70%, #cde1f2); border-right: 1px solid #89a9c4; letter-spacing: .2px; }
th:last-child, td:last-child { border-right: 0; }
.wrap { height: 25px; line-height: 16px; display: flex; align-items: center; justify-content: center; overflow: hidden; padding-bottom: 1px; }
.sort { display: flex; justify-content: flex-end; align-items: center; gap: 28px; padding-right: 5px; }
td { height: 36px; padding: 0 0 0 11px; border-right: 1px solid #89a9c4; white-space: pre; overflow: hidden; }
tbody tr { background: #ebf3fa; }
tbody tr:nth-child(odd) { background: #fff; }
tbody tr.sel { background: #d8e8f5; }
.sel td { height: 37px; border-top: 1px solid #0a64b4; border-bottom: 1px solid #0a64b4; }
.sel td:first-child { border-left: 1px solid #0a64b4; }
.sel td:last-child { border-right: 1px solid #0a64b4; }
.n { text-align: right; padding: 0 8px 0 0; }
.g { padding: 0 0 1px 22px; }
.g i { display: block; width: 7px; height: 9px; background: #7f7f7f; }
.m { padding-left: 6px; }
.scroll { background: #f0f0f0; display: flex; flex-direction: column; align-items: center; color: #555; }
.scroll > svg { margin-top: 5px; }
.scroll .dn { margin: auto 0 5px; }
.thumb { background: #cdcdcd; width: 100%; }
.main { width: 16px; height: 634px; }
.main .thumb { height: 259px; margin-top: 5px; }

/* calendar and notes */
.right { width: 180px; flex: none; }
h3 { height: 22px; background: #4a91cf; color: #e8f2fa; font-size: 12px; line-height: 24px; padding-left: 13px; border-bottom-left-radius: 12px; border-bottom: 1px solid #b0b0b0; letter-spacing: -.05px; }
.calrow { height: 419px; padding-top: 1px; display: flex; overflow: hidden; }
.cal { width: 164px; display: grid; grid-template-columns: 20px repeat(7, 20px); grid-auto-rows: 20px; font-size: 12px; line-height: 20px; text-align: center; color: #000; letter-spacing: -.3px; }
.cal b { color: #00f; font-style: italic; text-align: right; padding-right: 3px; font-size: 11px; letter-spacing: -.7px; }
.cal u { color: #e00018; text-decoration: none; }
.cal p { grid-column: 1/-1; text-align: left; padding-left: 10px; background: linear-gradient(90deg, #f5f5f5, #fff); letter-spacing: -.3px; }
.today { outline: 2px solid #d60000; outline-offset: -1px; border-radius: 50%; }
.side, .off { width: 15px; }
.side .thumb { height: 30px; margin-top: 182px; }
.noterow { height: 210px; display: flex; padding-top: 1px; }
.note { width: 156px; margin: 0 1px 0 7px; padding-left: 4px; background: #ffffe1; color: #777; font-size: 12px; line-height: 18px; }
.off { color: #bbb; }

/* status */
.status { height: 20px; flex: none; display: flex; font-size: 11.500px; line-height: 30px; overflow: hidden; padding-left: 6px; color: #a8a8a8; white-space: nowrap; letter-spacing: -.2px; }
.status em { font-style: normal; color: #e4e4e4; }
.s1 { width: 44px; } .s2 { width: 132px; } .s3 { width: 51px; } .s4 { width: 70px; } .s5 { width: 66px; }
.status .s2 { letter-spacing: -.75px; }

/* taskbar */
.taskbar { height: 40px; flex: none; display: flex; background: linear-gradient(90deg, #20363f 0, #20353f 55%, #1c2f40 70%, #1a2a44 90%, #1a2740); color: #fff; }
.start { width: 48px; padding: 12px 16px; }
.search { width: 288px; height: 39px; margin-top: 1px; background: #f2f2f2; border: 1px solid #b5b5b5; border-right: 0; display: flex; align-items: center; color: #222; font-size: 15px; letter-spacing: -.5px; }
.search span { padding-bottom: 2px; }
.mag-i { margin: 0 10px 0 11px; }
.bow { margin-left: auto; }
.tview { width: 51px; padding: 12px 0 0 16px; }
.app { width: 48px; margin-right: 1px; display: flex; align-items: center; justify-content: center; flex: none; }
.on { background: linear-gradient(#76b9ed, #76b9ed) 50% 100% / 40px 2px no-repeat; }
.active { background: linear-gradient(#76b9ed, #76b9ed) 50% 100% / 48px 2px no-repeat, #4a5b64; }
.weather { margin-left: 486px; display: flex; align-items: center; font-size: 15px; }
.weather svg { margin-top: -3px; }
.weather span { padding-bottom: 2px; }
.temp { margin-left: 6px; width: 38px; letter-spacing: -.8px; white-space: nowrap; }
.desc { width: 129px; letter-spacing: -.9px; white-space: nowrap; }
.tray { margin-top: 10px; }
.clock { width: 70px; display: flex; flex-direction: column; align-items: center; font-size: 12px; line-height: 18px; padding-top: 2px; letter-spacing: -.45px; }
.notif { margin: 10px 0 0 9px; }
.peek { width: 1px; height: 40px; background: #667; margin-left: 10px; }
.pointer { position: absolute; left: 1177px; top: 74px; }
```
